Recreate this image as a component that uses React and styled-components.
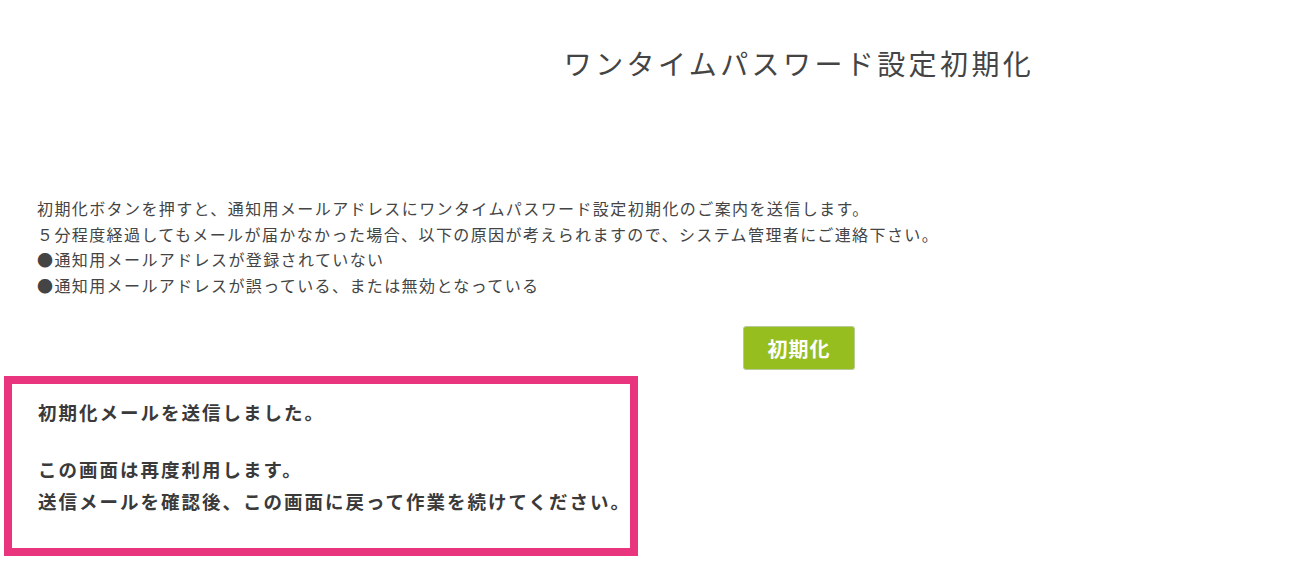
import React from "react";
import styled, { createGlobalStyle } from "styled-components";

const GlobalStyle = createGlobalStyle`
  html, body {
    margin: 0;
    padding: 0;
    background: #fff;
  }
  body {
    font-family: "Noto Sans CJK JP", "Noto Sans", sans-serif;
    color: #444;
  }
`;

const Page = styled.div`
  width: 1306px;
  padding: 0 4px;
  box-sizing: border-box;
`;

const TitleArea = styled.div`
  display: flex;
  justify-content: center;
  padding: 38px 0 0 292px;
  height: 150px;
  box-sizing: border-box;
`;

const Title = styled.h1`
  margin: 0;
  font-size: 28px;
  font-weight: 400;
  letter-spacing: 3.4px;
  color: #444;
  line-height: 50px;
`;

const Notice = styled.div`
  padding: 46px 0 0 33px;
  font-size: 16px;
  line-height: 25.5px;
  letter-spacing: 1.4px;
  color: #444;
`;

const Line = styled.div`
  white-space: nowrap;
`;

const ButtonRow = styled.div`
  display: flex;
  justify-content: center;
  padding: 28px 0 0 292px;
  height: 78px;
  box-sizing: border-box;
`;

const ResetButton = styled.button`
  width: 112px;
  height: 44px;
  background: #97be1f;
  border: 1px solid #b8c99a;
  border-radius: 3px;
  color: #fff;
  font-family: "Noto Sans CJK JP", sans-serif;
  font-size: 20px;
  font-weight: 700;
  letter-spacing: 1px;
  cursor: pointer;
`;

const MessageBox = styled.div`
  width: 634px;
  box-sizing: border-box;
  border: 8px solid #e9357d;
  padding: 12px 4px 31px 26px;
  font-size: 18.5px;
  font-weight: 700;
  letter-spacing: 2px;
  line-height: 32px;
  color: #3a3a3a;
  white-space: nowrap;
`;

const Paragraph = styled.p`
  margin: 0;
  & + & {
    margin-top: 25px;
  }
`;

export default function App() {
  return (
    <>
      <GlobalStyle />
      <Page>
        <TitleArea>
          <Title>ワンタイムパスワード設定初期化</Title>
        </TitleArea>
        <Notice>
          <Line>初期化ボタンを押すと、通知用メールアドレスにワンタイムパスワード設定初期化のご案内を送信します。</Line>
          <Line>５分程度経過してもメールが届かなかった場合、以下の原因が考えられますので、システム管理者にご連絡下さい。</Line>
          <Line>●通知用メールアドレスが登録されていない</Line>
          <Line>●通知用メールアドレスが誤っている、または無効となっている</Line>
        </Notice>
        <ButtonRow>
          <ResetButton>初期化</ResetButton>
        </ButtonRow>
        <MessageBox>
          <Paragraph>初期化メールを送信しました。</Paragraph>
          <Paragraph>
            この画面は再度利用します。
            <br />
            送信メールを確認後、この画面に戻って作業を続けてください。
          </Paragraph>
        </MessageBox>
      </Page>
    </>
  );
}
